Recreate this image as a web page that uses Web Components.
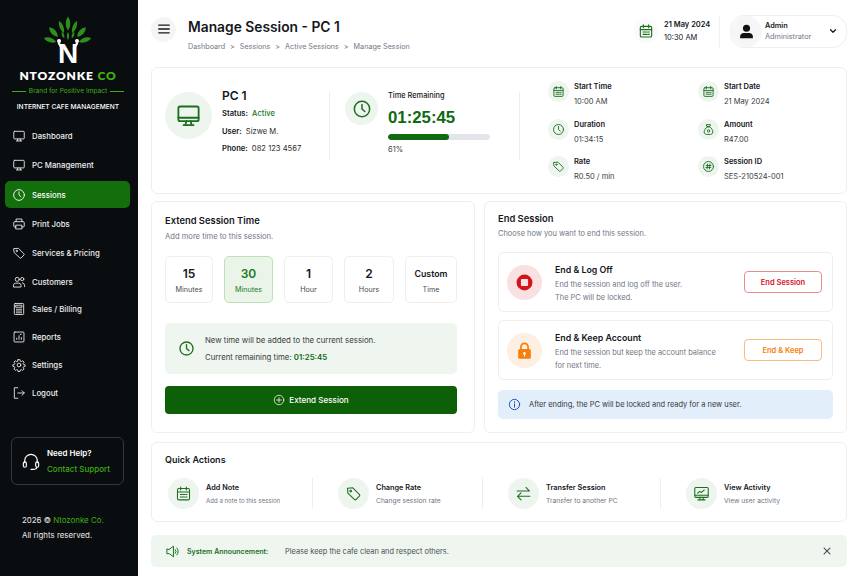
<!DOCTYPE html>
<html lang="en">
<head>
<meta charset="utf-8">
<title>Manage Session - PC 1</title>
<style>
html,body {margin:0;height:100%}
body {width:864px;height:576px;overflow:hidden;display:flex;background:#fff;font-family:Inter,"Liberation Sans",sans-serif;color:#15181c}
</style>
</head>
<body>

<side-bar>
  <nav-item icon=screen>Dashboard</nav-item>
  <nav-item icon=screen>PC Management</nav-item>
  <nav-item icon=clock active>Sessions</nav-item>
  <nav-item icon=printer>Print Jobs</nav-item>
  <nav-item icon=tag>Services &amp; Pricing</nav-item>
  <nav-item icon=users compact>Customers</nav-item>
  <nav-item icon=calc compact>Sales / Billing</nav-item>
  <nav-item icon=report compact>Reports</nav-item>
  <nav-item icon=gear compact>Settings</nav-item>
  <nav-item icon=logout compact>Logout</nav-item>
</side-bar>

<main-area>
  <page-header></page-header>
  <session-card>
    <stat-item icon=calendar label="Start Time">10:00 AM</stat-item>
    <stat-item icon=calendar label="Start Date">21 May 2024</stat-item>
    <stat-item icon=clock label="Duration">01:34:15</stat-item>
    <stat-item icon=bag label="Amount">R47.00</stat-item>
    <stat-item icon=tag label="Rate">R0.50 / min</stat-item>
    <stat-item icon=hash label="Session ID">SES-210524-001</stat-item>
  </session-card>
  <action-row>
    <extend-card>
      <time-option num="15" w="48">Minutes</time-option>
      <time-option num="30" w="49" selected>Minutes</time-option>
      <time-option num="1" w="49">Hour</time-option>
      <time-option num="2" w="50">Hours</time-option>
      <time-option num="Custom" w="52" small>Time</time-option>
    </extend-card>
    <end-card>
      <end-option tone=red icon=stop title="End &amp; Log Off" action="End Session">End the session and log off the user.<br>The PC will be locked.</end-option>
      <end-option tone=orange icon=lock title="End &amp; Keep Account" action="End &amp; Keep">End the session but keep the account balance<br>for next time.</end-option>
    </end-card>
  </action-row>
  <quick-card>
    <quick-action icon=calendar title="Add Note" w="148" tiny>Add a note to this session</quick-action>
    <quick-action icon=tag title="Change Rate" w="148">Change session rate</quick-action>
    <quick-action icon=swap title="Transfer Session" w="156">Transfer to another PC</quick-action>
    <quick-action icon=chart title="View Activity" w="150" last>View user activity</quick-action>
  </quick-card>
  <announce-bar></announce-bar>
</main-area>

<script>
var ICONS = {
  screen:'<rect x="3" y="4" width="18" height="13" rx="1.5"/><path d="M10 17l-.6 3M14 17l.6 3M7.5 20.5h9"/>',
  monitor:'<rect x="3" y="4" width="18" height="13" rx="1.5"/><path d="M3 14h18M10 17l-.6 3M14 17l.6 3M7.5 20.5h9"/>',
  clock:'<circle cx="12" cy="12" r="9.2"/><path d="M12 6.5V12l3.4 3"/>',
  printer:'<path d="M7 8V3.5h10V8M7 17H4.5A1.5 1.5 0 0 1 3 15.500V10a2 2 0 0 1 2-2h14a2 2 0 0 1 2 2v5.500a1.500 1.500 0 0 1-1.500 1.500H17"/><rect x="7" y="14" width="10" height="6.500"/>',
  tag:'<path d="M3.500 4.500l7.500-.5 9.500 9.500a1.500 1.500 0 0 1 0 2l-5 5a1.500 1.500 0 0 1-2 0L4 11.500z"/><circle cx="8" cy="8.500" r="1.200"/>',
  users:'<circle cx="9" cy="7.500" r="3.500"/><path d="M2.500 20v-2.500A4 4 0 0 1 6.500 14h5a4 4 0 0 1 4 4V20z"/><circle cx="17.500" cy="7" r="2.800"/><path d="M18 13.500a4 4 0 0 1 3.500 4V20"/>',
  calc:'<rect x="4" y="2.500" width="16" height="19" rx="1.500"/><rect x="7" y="5.500" width="10" height="3.500"/><path d="M7.500 12.500h2M11 12.500h2M14.500 12.500h2M7.500 15.500h2M11 15.500h2M14.500 15.500h2M7.500 18.500h2M11 18.500h2M14.500 18.500h2"/>',
  report:'<rect x="3.500" y="3.500" width="17" height="17" rx="1.500"/><path d="M8 16v-2M12 16v-6M16 16v-3M14 8l2-1"/>',
  gear:'<circle cx="12" cy="12" r="3.200"/><path d="M10.300 2.800h3.400l.6 2.700 1.700.7 2.300-1.500 2.400 2.400-1.500 2.300.7 1.700 2.700.6v2.600l-2.700.6-.7 1.700 1.500 2.300-2.400 2.400-2.300-1.500-1.700.7-.6 2.700h-3.400l-.6-2.700-1.700-.7-2.300 1.500-2.400-2.400 1.500-2.300-.7-1.700-2.700-.6v-2.600l2.700-.6.7-1.700-1.500-2.300 2.400-2.400 2.300 1.500 1.700-.7z"/>',
  logout:'<path d="M10 3H4v18h6M10 12h11M17 8l4 4-4 4"/>',
  headset:'<path d="M4.500 14v-2.500a7.500 7.500 0 0 1 15 0V14"/><rect x="2.800" y="13" width="3.600" height="6.500" rx="1.800"/><rect x="17.600" y="13" width="3.600" height="6.500" rx="1.800"/><path d="M19 19.500c0 1.800-2 2.500-5 2.500h-2"/>',
  calendar:'<rect x="3.500" y="5" width="17" height="16" rx="2"/><path d="M3.500 10h17M8 2.800V7M16 2.800V7M7.500 13.500h2.500M11 13.500h2.500M15 13.500h2M7.500 17h2.500M11 17h2.500M15 17h2"/>',
  bag:'<path d="M8.500 3h7l-1.500 4h-4zM10 7h4c3.500 2.500 6 6 6 9.500 0 3-2 4.500-4.500 4.500h-7C6 21 4 19.500 4 16.500 4 13 6.500 9.500 10 7z"/><circle cx="12" cy="14.500" r="2.200"/>',
  hash:'<circle cx="12" cy="12" r="9.200"/><path d="M10.300 7.500l-1 9M14.700 7.500l-1 9M7.800 10.200h8.800M7.400 13.800h8.800"/>',
  swap:'<path d="M3 8.500h17.500M15.500 3.500l5 5M21 16H3.500M8.500 11l-5 5 5 5"/>',
  chart:'<rect x="2.500" y="3.500" width="19" height="14" rx="1.500"/><path d="M2.500 14.500h19M10 17.500l-.6 3M14 17.500l.6 3M7 21h10M6.500 11.500l3-2.500 2.500 1.500 4-3.500"/>',
  speaker:'<path d="M3 8.500v7h4l6.500 5V3.500L7 8.500zM16.500 9a4.500 4.500 0 0 1 0 6M19 6.500a8 8 0 0 1 0 11"/>',
  plus:'<circle cx="12" cy="12" r="9.500"/><path d="M12 7.500v9M7.500 12h9"/>',
  info:'<circle cx="12" cy="12" r="9.500"/><path d="M12 11v6M12 7v1.400"/>',
  x:'<path d="M5 5l14 14M19 5L5 19"/>',
  chevron:'<path d="M6 9l6 6 6-6"/>',
  menu:'<path d="M3 5.500h18M3 12h18M3 18.500h18"/>',
  stop:'<circle cx="12" cy="12" r="10" fill="currentColor" stroke="none"/><rect x="7.500" y="7.500" width="9" height="9" rx="1" fill="#f9e0e1" stroke="none"/>',
  lock:'<path d="M7.500 11V7.500a4.500 4.500 0 0 1 9 0V11" fill="none" stroke-width="2.200"/><rect x="4" y="10" width="16" height="12.500" rx="2" fill="currentColor" stroke="none"/><circle cx="12" cy="15.500" r="1.600" fill="#fff" stroke="none"/><path d="M12 16v3" stroke="#fff" stroke-width="1.400"/>',
  person:'<circle cx="12" cy="7.500" r="5" fill="currentColor" stroke="none"/><path d="M3 21.500v-2.500c0-3 2.500-5 5-5h8c2.500 0 5 2 5 5v2.500z" fill="currentColor" stroke="none"/>'
};

class AppIcon extends HTMLElement {
  constructor() {
    super();
    var s = this.getAttribute('size') || 16;
    var w = this.getAttribute('weight') || 1.7;
    this.attachShadow({mode:'open'}).innerHTML =
      '<style>:host{display:inline-flex;flex:none;line-height:0}</style>'+
      '<svg width="'+s+'" height="'+s+'" viewBox="0 0 24 24" fill="none" stroke="currentColor" stroke-width="'+w+'" stroke-linecap="round" stroke-linejoin="round">'+
      ICONS[this.getAttribute('name')]+'</svg>';
  }
}
customElements.define('app-icon',AppIcon);

class IconBadge extends HTMLElement {
  constructor() {
    super();
    var d = this.getAttribute('d'), s = this.getAttribute('size');
    var bg = this.getAttribute('bg') || '#eef5ee', c = this.getAttribute('color') || '#1b6f1f';
    this.attachShadow({mode:'open'}).innerHTML =
      '<style>:host{display:flex;flex:none;align-items:center;justify-content:center;border-radius:50%;width:'+d+'px;height:'+d+'px;background:'+bg+';color:'+c+'}</style>'+
      '<app-icon name="'+this.getAttribute('name')+'" size="'+s+'" weight="'+(this.getAttribute('weight')||1.7)+'"></app-icon>';
  }
}
customElements.define('icon-badge',IconBadge);

class BrandLogo extends HTMLElement {
  constructor() {
    super();
    // one leaf: centre x,y then rotation, length, width
    var leaf = (x,y,a,l,w)=>'<path transform="translate('+x+' '+y+') rotate('+a+')" d="M0 '+(l/2)+'C'+(w/2)+' '+(l/5)+' '+(w/2)+' -'+(l/5)+' 0 -'+(l/2)+'C-'+(w/2)+' -'+(l/5)+' -'+(w/2)+' '+(l/5)+' 0 '+(l/2)+'z"/>';
    this.attachShadow({mode:'open'}).innerHTML = `
      <style>
        :host {display:flex;flex-direction:column;align-items:center}
        svg {margin-bottom:-6px}
        .name {font:800 12px/1 Lato,"Liberation Sans",sans-serif;letter-spacing:.85px;color:#fff;margin-top:6px;white-space:nowrap}
        .name b {color:#3fae14;font-weight:800}
        .tag {display:flex;align-items:center;gap:3px;width:112px;margin-top:5px;color:#3fae14;font-size:6.600px;line-height:9px;white-space:nowrap}
        .tag i {flex:1;height:1px;background:#3fae14}
        .sub {color:#fff;font-size:6.650px;font-weight:500;line-height:9px;margin-top:7px;white-space:nowrap}
      </style>
      <svg width="68" height="54" viewBox="0 0 68 54">
        <g fill="#2f8f1c">
          ${leaf(34,7.500,0,14,6)}${leaf(27.500,11,-22,13,5)}${leaf(40.500,11,22,13,5)}
          ${leaf(19.500,16,-42,13,6.500)}${leaf(47.500,16,42,13,6.500)}
          ${leaf(16,24,-72,13,6)}${leaf(51,24,72,13,6)}
          ${leaf(29,19,-18,7,3)}${leaf(39,19,18,7,3)}${leaf(34,20,0,8,3)}
        </g>
        <g fill="#fff"><circle cx="25" cy="25" r="2"/><circle cx="43" cy="25" r="2"/></g>
        <path d="M25 27.500l3 5M43 27.500l-3 5" stroke="#fff" stroke-width="2.400" stroke-linecap="round"/>
        <text x="34" y="47" text-anchor="middle" font-family="Liberation Sans" font-weight="700" font-size="28" fill="#fff">N</text>
      </svg>
      <div class=name>NTOZONKE <b>CO</b></div>
      <div class=tag><i></i>Brand for Positive Impact<i></i></div>
      <div class=sub>INTERNET CAFE MANAGEMENT</div>`;
  }
}
customElements.define('brand-logo',BrandLogo);

class SideBar extends HTMLElement {
  constructor() {
    super();
    this.attachShadow({mode:'open'}).innerHTML = `
      <style>
        :host {display:flex;flex-direction:column;flex:none;width:138px;height:576px;box-sizing:border-box;padding:16px 8px 0 5px;background:#0a0d0f;color:#fff;font-size:8.300px}
        brand-logo {margin-right:-1px}
        nav {display:flex;flex-direction:column;margin-top:9.500px}
        .help {display:flex;align-items:center;gap:6px;margin:30px 6px 0 6px;height:48px;box-sizing:border-box;padding:0 0 0 9px;border:1px solid #33383c;border-radius:6px;font-size:8px;line-height:16px;font-weight:500}
        .help b {display:block;font-weight:600}
        .help span {color:#3fae14}
        .copy {margin:28px 0 0 17px;font-size:7.900px;line-height:15.500px;color:#e8e8e8}
        .copy span {color:#3fae14}
      </style>
      <brand-logo></brand-logo>
      <nav><slot></slot></nav>
      <div class=help>
        <app-icon name=headset size=20 weight=1.400></app-icon>
        <div><b>Need Help?</b><span>Contact Support</span></div>
      </div>
      <div class=copy>2026 &copy; <span>Ntozonke Co.</span><br>All rights reserved.</div>`;
  }
}
customElements.define('side-bar',SideBar);

class NavItem extends HTMLElement {
  constructor() {
    super();
    this.attachShadow({mode:'open'}).innerHTML = `
      <style>
        :host {display:flex;align-items:center;gap:6px;height:29.300px;box-sizing:border-box;padding-left:7px;font-size:7.800px;font-weight:500;color:#eee;white-space:nowrap}
        :host([compact]) {height:27.800px}
        :host([active]) {height:27px;margin:1px 0;background:#136e0c;border-radius:5px;color:#fff}
      </style>
      <app-icon name="${this.getAttribute('icon')}" size="14" weight="1.500"></app-icon>
      <slot></slot>`;
  }
}
customElements.define('nav-item',NavItem);

class MainArea extends HTMLElement {
  constructor() {
    super();
    this.attachShadow({mode:'open'}).innerHTML = `
      <style>
        :host {display:flex;flex-direction:column;flex:1;min-width:0;box-sizing:border-box;padding:0 17px 0 13px;background:#fff}
        ::slotted(session-card) {margin-bottom:7px}
        ::slotted(action-row) {margin-bottom:9px}
        ::slotted(quick-card) {margin-bottom:13px}
      </style>
      <slot></slot>`;
  }
}
customElements.define('main-area',MainArea);

class PageHeader extends HTMLElement {
  constructor() {
    super();
    this.attachShadow({mode:'open'}).innerHTML = `
      <style>
        :host {display:flex;align-items:center;height:67px;box-sizing:border-box}
        .menu {display:flex;align-items:center;justify-content:center;width:25px;height:25px;border-radius:50%;background:#f5f5f5;color:#15181c;margin:-9px 12px 0 0}
        h1 {margin:0;font-size:13.800px;font-weight:600;line-height:20px}
        .crumbs {display:flex;gap:5px;margin-top:5px;font-size:7.200px;line-height:10px;color:#717684;white-space:nowrap}
        .titles {flex:1;margin-top:2px}
        .date {display:flex;align-items:center;gap:6px;font-size:7.500px;line-height:13px;margin:-5px 0 0 0;padding-right:11px;border-right:1px solid #f1f1f1;height:33px;width:74px;white-space:nowrap}
        .date b {display:block;font-weight:600}
        .user {display:flex;align-items:center;width:117px;height:33px;box-sizing:border-box;margin:-5px 0 0 10px;border:1px solid #efefef;border-radius:14px}
        .user div {flex:1;font-size:7.300px;line-height:11px;margin-left:3px}
        .user b {display:block;font-weight:600}
        .user span {color:#717684}
        .user app-icon {margin-right:8px}
      </style>
      <div class=menu><app-icon name=menu size=14 weight=2.200></app-icon></div>
      <div class=titles>
        <h1>Manage Session - PC 1</h1>
        <div class=crumbs><span>Dashboard</span><span>&gt;</span><span>Sessions</span><span>&gt;</span><span>Active Sessions</span><span>&gt;</span><span>Manage Session</span></div>
      </div>
      <div class=date>
        <icon-badge name=calendar d=24 size=16 bg="#fafafa" color="#1b6f1f"></icon-badge>
        <div><b>21 May 2024</b>10:30 AM</div>
      </div>
      <div class=user>
        <icon-badge name=person d=31 size=17 bg="#f6f6f6" color="#111"></icon-badge>
        <div><b>Admin</b><span>Administrator</span></div>
        <app-icon name=chevron size=10 weight=3></app-icon>
      </div>`;
  }
}
customElements.define('page-header',PageHeader);

class SessionCard extends HTMLElement {
  constructor() {
    super();
    this.attachShadow({mode:'open'}).innerHTML = `
      <style>
        :host {display:flex;height:127px;box-sizing:border-box;padding:24px 0 0 13px;border:1px solid #efefef;border-radius:6px;font-size:7.600px}
        .pc {display:flex;gap:10px;width:164px;height:68px;border-right:1px solid #eceff1}
        h2 {margin:-4px 0 0;font-size:12px;line-height:16px;font-weight:600}
        .pc p {margin:0;line-height:17.600px;white-space:nowrap;color:#2b2e33}
        .pc p:first-of-type {margin-top:1px}
        .pc b {font-weight:600;color:#15181c;margin-right:2px}
        .pc span {color:#1b7a1f;font-weight:500}
        .time {display:flex;gap:10px;width:174px;height:68px;padding-left:15px;border-right:1px solid #eceff1}
        .time h3 {margin:-2px 0 0;font-size:7.400px;line-height:12px;font-weight:500}
        .count {font-size:16.800px;line-height:22px;font-weight:700;color:#0f6a12;margin-top:5px;font-family:"Liberation Sans",sans-serif}
        .bar {width:102px;height:6px;border-radius:3px;background:#e3e5ea;margin-top:5px;overflow:hidden}
        .bar i {display:block;width:61px;height:6px;background:#0f6a12;border-radius:3px}
        .pct {font-size:7.500px;line-height:10px;margin-top:5px;color:#3a3d42}
        .stats {display:grid;grid-template-columns:150px 120px;grid-auto-rows:37.600px;margin:-11px 0 0 28px}
      </style>
      <div class=pc>
        <icon-badge name=monitor d=47 size=27 weight=1.600></icon-badge>
        <div>
          <h2>PC 1</h2>
          <p><b>Status:</b> <span>Active</span></p>
          <p><b>User:</b> Sizwe M.</p>
          <p><b>Phone:</b> 082 123 4567</p>
        </div>
      </div>
      <div class=time>
        <icon-badge name=clock d=33 size=20 weight=1.800></icon-badge>
        <div>
          <h3>Time Remaining</h3>
          <div class=count>01:25:45</div>
          <div class=bar><i></i></div>
          <div class=pct>61%</div>
        </div>
      </div>
      <div class=stats><slot></slot></div>`;
  }
}
customElements.define('session-card',SessionCard);

class StatItem extends HTMLElement {
  constructor() {
    super();
    this.attachShadow({mode:'open'}).innerHTML = `
      <style>
        :host {display:flex;gap:5px;font-size:7.500px;line-height:10px;white-space:nowrap;color:#3a3d42}
        div {padding-top:1px}
        b {display:block;font-weight:600;color:#15181c;margin-bottom:5px}
      </style>
      <icon-badge name="${this.getAttribute('icon')}" d=21 size=13 weight=1.700></icon-badge>
      <div><b>${this.getAttribute('label')}</b><slot></slot></div>`;
  }
}
customElements.define('stat-item',StatItem);

class ActionRow extends HTMLElement {
  constructor() {
    super();
    this.attachShadow({mode:'open'}).innerHTML = `
      <style>:host {display:grid;grid-template-columns:324px 363px;gap:9px;height:232px}</style>
      <slot></slot>`;
  }
}
customElements.define('action-row',ActionRow);

class ExtendCard extends HTMLElement {
  constructor() {
    super();
    this.attachShadow({mode:'open'}).innerHTML = `
      <style>
        :host {display:block;box-sizing:border-box;padding:12px 17px 0 13px;border:1px solid #efefef;border-radius:6px}
        h2 {margin:0;font-size:9.400px;line-height:14px;font-weight:600}
        .sub {font-size:7.600px;line-height:10px;margin-top:4px;color:#717684}
        .opts {display:flex;justify-content:space-between;margin-top:14px}
        .note {display:flex;align-items:center;gap:10px;height:51px;box-sizing:border-box;padding:0 0 0 13px;margin-top:20px;background:#eff6ef;border-radius:5px;font-size:7.800px;line-height:16.500px;color:#3a3d42}
        .note b {color:#0f6a12;font-weight:600}
        .go {display:flex;align-items:center;justify-content:center;gap:4px;height:28px;margin-top:12px;background:#0d5f08;border-radius:4px;color:#fff;font-size:8.100px;font-weight:500}
      </style>
      <h2>Extend Session Time</h2>
      <div class=sub>Add more time to this session.</div>
      <div class=opts><slot></slot></div>
      <div class=note>
        <span style="color:#1b6f1f;line-height:0"><app-icon name=clock size=17 weight=1.900></app-icon></span>
        <div>New time will be added to the current session.<br>Current remaining time: <b>01:25:45</b></div>
      </div>
      <div class=go><app-icon name=plus size=12 weight=1.500></app-icon>Extend Session</div>`;
  }
}
customElements.define('extend-card',ExtendCard);

class TimeOption extends HTMLElement {
  constructor() {
    super();
    this.attachShadow({mode:'open'}).innerHTML = `
      <style>
        :host {display:flex;flex-direction:column;align-items:center;justify-content:center;width:${this.getAttribute('w')}px;height:47px;box-sizing:border-box;border:1px solid #efefef;border-radius:5px;font-size:7.200px;color:#4a4d52}
        :host([selected]) {background:#eaf4e8;border-color:#bfe0bb;color:#1b7a1f}
        b {font-size:12px;line-height:16px;font-weight:600;color:#15181c;margin-bottom:3px}
        :host([selected]) b {color:#1b7a1f}
        :host([small]) b {font-size:8.800px}
      </style>
      <b>${this.getAttribute('num')}</b><slot></slot>`;
  }
}
customElements.define('time-option',TimeOption);

class EndCard extends HTMLElement {
  constructor() {
    super();
    this.attachShadow({mode:'open'}).innerHTML = `
      <style>
        :host {display:flex;flex-direction:column;box-sizing:border-box;padding:10px 13px 0 13px;border:1px solid #efefef;border-radius:6px}
        h2 {margin:0;font-size:9.400px;line-height:14px;font-weight:600}
        .sub {font-size:7.450px;line-height:10px;margin-top:3px;margin-bottom:13px;color:#717684}
        .opts {display:flex;flex-direction:column;gap:8px}
        .tip {display:flex;align-items:center;gap:8px;height:29px;box-sizing:border-box;margin-top:10px;padding-left:10px;background:#e3eefb;border-radius:5px;font-size:7.450px;color:#33373d}
        .tip span {color:#1d4fb0;line-height:0}
      </style>
      <h2>End Session</h2>
      <div class=sub>Choose how you want to end this session.</div>
      <div class=opts><slot></slot></div>
      <div class=tip><span><app-icon name=info size=13 weight=1.800></app-icon></span>After ending, the PC will be locked and ready for a new user.</div>`;
  }
}
customElements.define('end-card',EndCard);

class EndOption extends HTMLElement {
  constructor() {
    super();
    var red = this.getAttribute('tone')=='red';
    var c = red ? '#d3141c' : '#f57f0c', bg = red ? '#f9e0e1' : '#fdefe1', line = red ? '#ee8b8f' : '#f8bd83';
    this.attachShadow({mode:'open'}).innerHTML = `
      <style>
        :host {display:flex;align-items:center;height:60px;box-sizing:border-box;padding:0 10px 0 8px;border:1px solid #efefef;border-radius:5px}
        .txt {flex:1;margin-left:13px;padding-top:2px;font-size:7.400px;line-height:13px;color:#717684;white-space:nowrap}
        b {display:block;font-size:8.800px;line-height:13px;font-weight:600;color:#15181c;margin-bottom:2px}
        .btn {display:flex;align-items:center;justify-content:center;width:78px;height:22px;box-sizing:border-box;border:1px solid ${line};border-radius:4px;color:${c};font-size:7.500px;font-weight:600}
      </style>
      <icon-badge name="${this.getAttribute('icon')}" d=35 size=19 bg="${bg}" color="${c}"></icon-badge>
      <div class=txt><b>${this.getAttribute('title')}</b><slot></slot></div>
      <div class=btn>${this.getAttribute('action')}</div>`;
  }
}
customElements.define('end-option',EndOption);

class QuickCard extends HTMLElement {
  constructor() {
    super();
    this.attachShadow({mode:'open'}).innerHTML = `
      <style>
        :host {display:block;height:80px;box-sizing:border-box;padding:10px 13px 0 13px;border:1px solid #efefef;border-radius:6px}
        h2 {margin:0;font-size:9px;line-height:13px;font-weight:600}
        .row {display:flex;margin-top:12px}
      </style>
      <h2>Quick Actions</h2>
      <div class=row><slot></slot></div>`;
  }
}
customElements.define('quick-card',QuickCard);

class QuickAction extends HTMLElement {
  constructor() {
    super();
    this.attachShadow({mode:'open'}).innerHTML = `
      <style>
        :host {display:flex;align-items:center;gap:7px;flex:none;width:${this.getAttribute('w')}px;height:31px;box-sizing:border-box;padding-left:3px;margin-right:22px;font-size:6.700px;line-height:10px;color:#717684;white-space:nowrap;border-right:1px solid #eceff1}
        :host([last]) {border:0;margin:0}
        :host([tiny]) {font-size:6.100px}
        b {display:block;font-size:7.300px;line-height:11px;font-weight:600;color:#15181c;margin-bottom:3px}
      </style>
      <icon-badge name="${this.getAttribute('icon')}" d=31 size=17 weight=1.500></icon-badge>
      <div><b>${this.getAttribute('title')}</b><slot></slot></div>`;
  }
}
customElements.define('quick-action',QuickAction);

class AnnounceBar extends HTMLElement {
  constructor() {
    super();
    this.attachShadow({mode:'open'}).innerHTML = `
      <style>
        :host {display:flex;align-items:center;height:32px;box-sizing:border-box;padding:0 15px 0 14px;background:#eff6ef;border-radius:5px;font-size:7.400px;white-space:nowrap;color:#4a4d52}
        .ic {color:#1b6f1f;line-height:0;margin-right:7px}
        b {color:#1b6f1f;font-weight:600;width:98px;font-size:7px}
        .msg {flex:1}
      </style>
      <span class=ic><app-icon name=speaker size=15 weight=1.600></app-icon></span>
      <b>System Announcement:</b>
      <span class=msg>Please keep the cafe clean and respect others.</span>
      <app-icon name=x size=10 weight=2.600></app-icon>`;
  }
}
customElements.define('announce-bar',AnnounceBar);
</script>
</body>
</html>
